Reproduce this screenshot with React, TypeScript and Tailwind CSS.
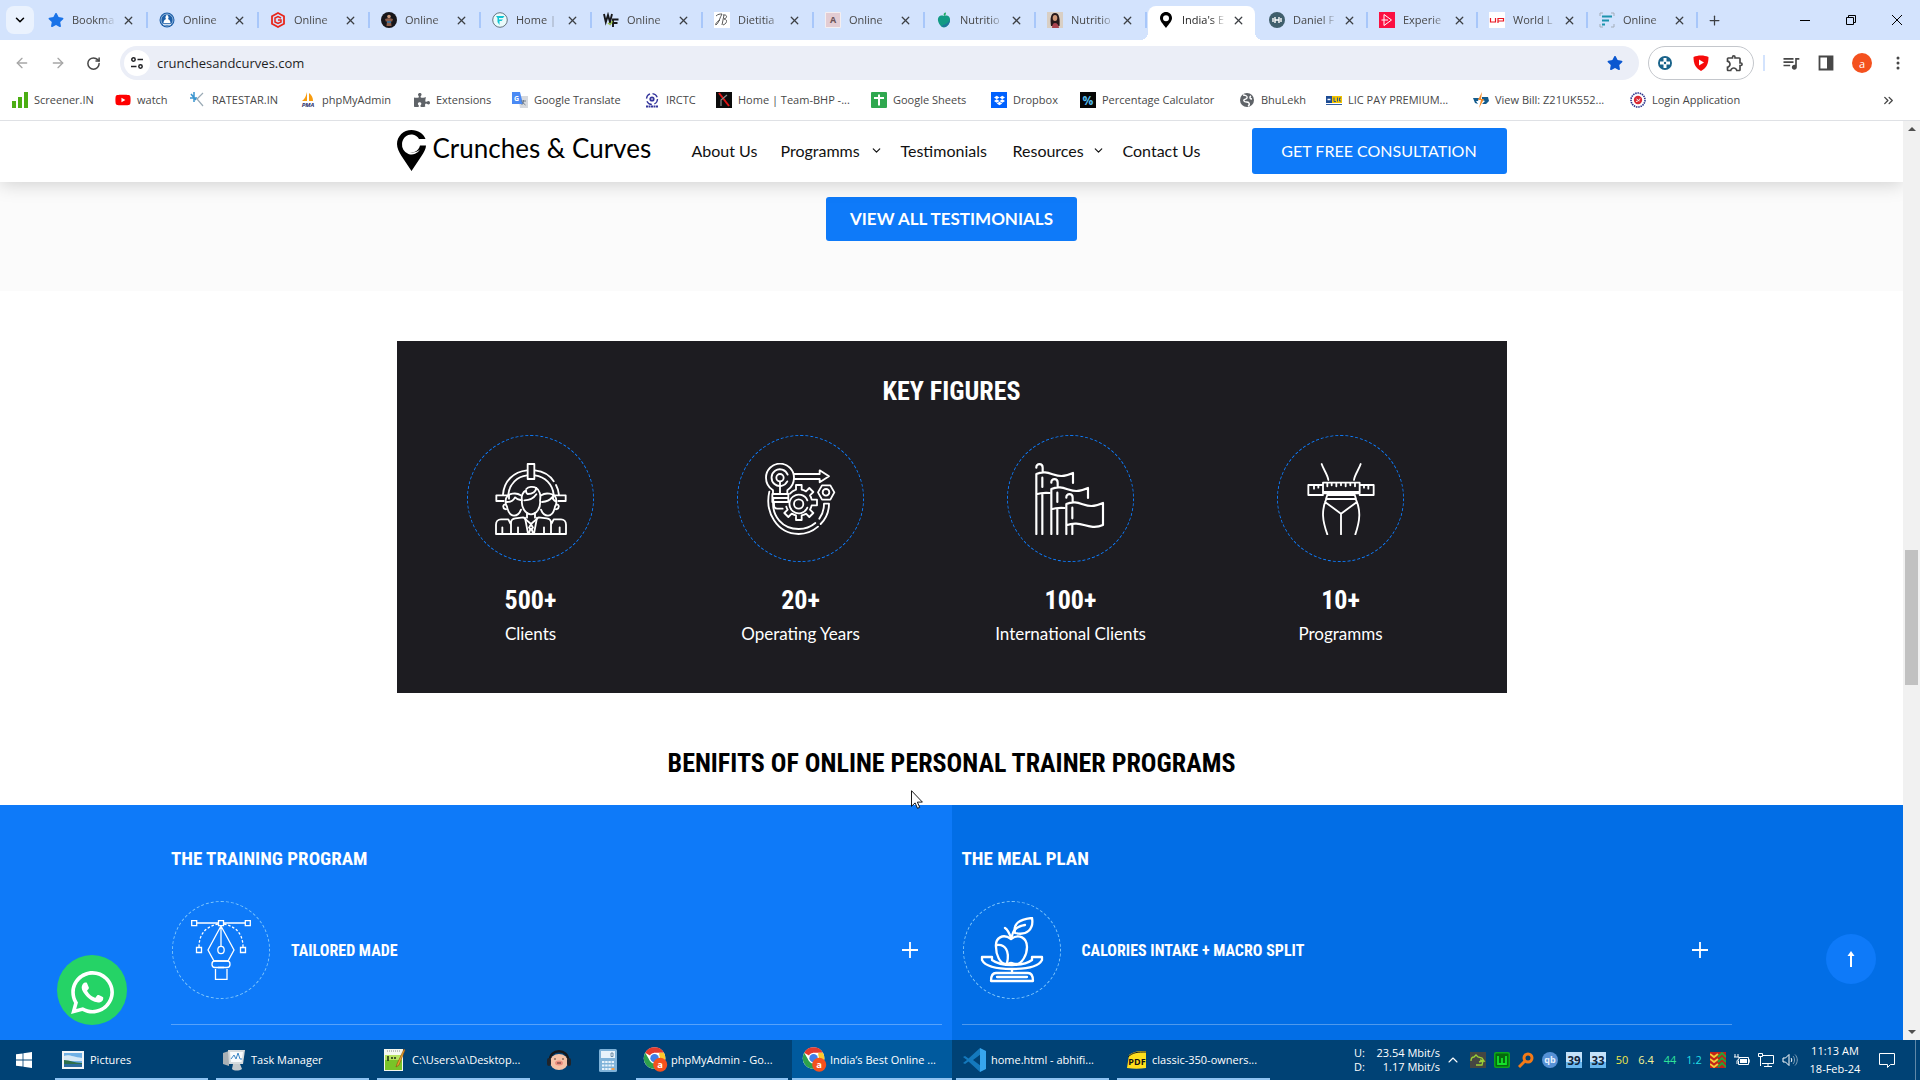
import type { ReactNode } from "react";
import { FaWhatsapp, FaYoutube, FaDropbox, FaStar, FaPuzzlePiece } from "react-icons/fa";
import { MdQueueMusic, MdOutlineExtension } from "react-icons/md";
import { ArrowLeft, ArrowRight, ChevronDown, ChevronUp, ChevronsRight, Plus, RotateCw, X } from "lucide-react";

const UI = "font-['Open_Sans','Noto_Sans',sans-serif]";
const BODY = "font-['Lato','Open_Sans',sans-serif]";
const DISPLAY = "font-['Roboto_Condensed','Roboto',sans-serif] font-bold";

function Svg({ box = "0 0 16 16", className = "size-4", children }: { box?: string; className?: string; children: ReactNode }) {
  return (
    <svg viewBox={box} className={`shrink-0 ${className}`} fill="none" aria-hidden="true">
      {children}
    </svg>
  );
}

function Letter({ children, fill, size = 9, x = 8, y = 11 }: { children: string; fill: string; size?: number; x?: number; y?: number }) {
  return (
    <text x={x} y={y} textAnchor="middle" fontSize={size} fontWeight="700" fill={fill} fontFamily="Open Sans, sans-serif">
      {children}
    </text>
  );
}

/* ---------- Tab icons ---------- */

const PIN = "M8 0C4.700 0 2 2.600 2 6c0 3 3 6 6 10 3-4 6-7 6-10 0-3.400-2.700-6-6-6Zm0 3.200a3 3 0 1 1 0 6 3 3 0 0 1 0-6Z";

type TabInfo = { title: string; icon: ReactNode; active?: boolean; late?: boolean };

const TABS: TabInfo[] = [
  { title: "Bookma", icon: <FaStar className="size-4 shrink-0 text-[#1a73e8]" /> },
  {
    title: "Online",
    icon: (
      <Svg>
        <circle cx="8" cy="8" r="7.500" fill="#1d5fa8" />
        <circle cx="8" cy="8" r="6" stroke="#dbe9f7" strokeWidth=".6" />
        <path d="M8 2.500c2 2.500 2 3.500.8 4.500C11 8 11.500 9.500 11.500 11h-7C4.500 9.500 5 8 7.200 7 6 6 6 5 8 2.500Z" fill="#fff" />
        <path d="M4 12.300h8" stroke="#fff" />
      </Svg>
    ),
  },
  {
    title: "Online",
    icon: (
      <Svg>
        <path d="m8 1 6 3.200v7.600L8 15l-6-3.200V4.200L8 1Z" stroke="#e8261c" strokeWidth="1.800" />
        <path d="M11 6 8 4.500 5 6v4l3 1.500 3-1.500V8H8" stroke="#e8261c" strokeWidth="1.500" />
      </Svg>
    ),
  },
  {
    title: "Online",
    icon: (
      <Svg>
        <circle cx="8" cy="8" r="8" fill="#17161a" />
        <circle cx="8" cy="4.500" r="1.800" fill="#c99a7c" />
        <path d="M4 7c2-1 6-1 8 0l-1 3-1-1 .5 5h-5l.5-5-1 1-1-3Z" fill="#8e5f4b" />
        <path d="M6 9h4v2H6z" fill="#3f6f93" />
      </Svg>
    ),
  },
  {
    title: "Home |",
    icon: (
      <Svg>
        <circle cx="8" cy="8" r="7.300" fill="#e9fbfb" stroke="#66757f" />
        <path d="M4 4h8.500l-1.500 2H7v1.500h4L9.500 9H7.500v4L5.500 10V6L4 4Z" fill="#12c4d3" />
      </Svg>
    ),
  },
  {
    title: "Online",
    icon: (
      <Svg>
        <path d="m1 2 1.800 8L5 3l2 7 2-8M10 15V7.500h5.500M10 11h4.500" stroke="#17181a" strokeWidth="1.900" />
        <path d="M5 11c2 2 4 1 4-2" stroke="#9cc93a" strokeWidth="1.200" />
      </Svg>
    ),
  },
  {
    title: "Dietitia",
    icon: (
      <Svg>
        <path fill="#fff" d="M0 0h16v16H0z" />
        <path d="M2 4c2-2 4-2 6-2-2 3-3 9-6 11-1 0 0-3 4-5M10 3 8 13M9 3c4-1 5 3 1 4 4 0 3 5-1 6" stroke="#4a4a4a" strokeWidth=".9" />
      </Svg>
    ),
  },
  {
    title: "Online",
    icon: (
      <Svg>
        <path fill="#e3ccd3" stroke="#f4eef0" d="M.5.5h15v15H.5z" />
        <Letter fill="#6a5358">A</Letter>
      </Svg>
    ),
  },
  {
    title: "Nutritio",
    icon: (
      <Svg>
        <path d="M8 4c4-1.500 6.500 1 6 4.500S10.500 15.500 8 15.500 2.500 12 2 8.500 4 2.500 8 4Z" fill="#129b84" />
        <path d="M8 15c4 0 6-4 6-7-2 3-5 5-9 6l3 1Z" fill="#20749c" />
        <path d="M8 4C7 2 8 .500 10 .500 10 2 9.500 3.500 8 4Z" fill="#1eab62" />
      </Svg>
    ),
  },
  {
    title: "Nutritio",
    icon: (
      <Svg>
        <path fill="#d9cfc4" d="M0 0h16v16H0z" />
        <path fill="#26181a" d="M4 14C3 7 3.500 1 8 1s5 6 4.500 13H4Z" />
        <ellipse cx="8" cy="6" rx="2.300" ry="3" fill="#cf9777" />
        <path fill="#a8434f" d="M5 16c0-3 1-5 3-5s4 2 4 5H5Z" />
      </Svg>
    ),
  },
  { title: "India's E", active: true, icon: <Svg><path d={PIN} fill="#000" fillRule="evenodd" /></Svg> },
  {
    title: "Daniel F",
    late: true,
    icon: (
      <Svg>
        <circle cx="8" cy="8" r="8" fill="#405f6c" />
        <path d="M4 6v4M6 5v6M10 5v6M12 6v4M6 8h4" stroke="#fff" strokeWidth="1.400" />
      </Svg>
    ),
  },
  {
    title: "Experie",
    late: true,
    icon: (
      <Svg>
        <path fill="#fb1142" d="M0 0h16v16H0z" />
        <path d="M5 2.500v11L12.500 8 5 2.500ZM2.500 8H9" stroke="#fff" strokeWidth="1" />
      </Svg>
    ),
  },
  {
    title: "World L",
    late: true,
    icon: (
      <Svg>
        <path fill="#fff" d="M0 0h16v16H0z" />
        <path d="M1.500 6v4h5V6M9 11V6.500h5.500V9H9" stroke="#ea1722" strokeWidth="1.200" />
      </Svg>
    ),
  },
  {
    title: "Online",
    late: true,
    icon: (
      <Svg>
        <path d="M1 4V1h3M12 1h3v3M15 12v3h-3M4 15H1v-3" stroke="#a3adb8" />
        <path d="M3 4.500h10M3 8.500h7M3 12.500h3" stroke="#1c93ad" strokeWidth="2.200" />
      </Svg>
    ),
  },
];

function Tab({ title, icon, active, late }: TabInfo) {
  return (
    <div className={`flex h-[34px] shrink-0 items-center ${late ? "w-[110px]" : "w-[111px]"}`}>
      <div className={`relative flex h-full min-w-0 flex-1 items-center pb-1.5 ${active ? "mx-px rounded-t-lg bg-white pl-2.5" : "pl-[11px]"}`}>
        {active && (
          <>
            <span className="absolute bottom-0 -left-2 size-2 bg-[radial-gradient(circle_at_0_0,#d3e3fd_8px,#fff_8px)]" />
            <span className="absolute bottom-0 -right-2 size-2 bg-[radial-gradient(circle_at_100%_0,#d3e3fd_8px,#fff_8px)]" />
          </>
        )}
        {icon}
        <span
          className={`ml-2 w-[44px] shrink-0 whitespace-nowrap text-[11px] [mask-image:linear-gradient(to_right,#000_65%,transparent)] ${active ? "text-[#1f1f1f]" : "text-[#474747]"}`}
        >
          {title}
        </span>
        <button type="button" aria-label={`Close ${title}`} className="ml-1.5 shrink-0 text-[#3c3f43]">
          <X size={13} strokeWidth={2.4} />
        </button>
      </div>
      <span className={`mb-1.5 h-4 w-0.5 ${active ? "bg-transparent" : "bg-[#a8c7fa]"}`} />
    </div>
  );
}

function TabStrip() {
  return (
    <div className="flex h-10 shrink-0 items-end bg-[#d3e3fd]">
      <button type="button" aria-label="Search tabs" className="mb-1.5 ml-1.5 mr-[3px] grid size-7 shrink-0 place-items-center rounded-lg bg-[#eaf2fe]">
        <ChevronDown size={14} strokeWidth={2.6} />
      </button>
      {TABS.map((t, i) => (
        <Tab key={i} {...t} />
      ))}
      <button type="button" aria-label="New tab" className="mb-2.5 ml-1.5 grid size-5 place-items-center text-[#3c3f43]">
        <Plus size={15} strokeWidth={2} />
      </button>
      <div className="ml-auto flex h-10 items-center">
        <button type="button" aria-label="Minimize" className="grid h-full w-[46px] place-items-center">
          <span className="h-px w-2.5 bg-black" />
        </button>
        <button type="button" aria-label="Restore" className="grid h-full w-[46px] place-items-center">
          <Svg box="0 0 10 10" className="size-2.5">
            <path d="M.5 2.500h7v7h-7zM2.500 2.500v-2h7v7h-2" stroke="#000" />
          </Svg>
        </button>
        <button type="button" aria-label="Close window" className="grid h-full w-[46px] place-items-center">
          <Svg box="0 0 10 10" className="size-2.5">
            <path d="m0 0 10 10M10 0 0 10" stroke="#000" />
          </Svg>
        </button>
      </div>
    </div>
  );
}

/* ---------- Address bar ---------- */

function Toolbar() {
  return (
    <div className="flex h-[46px] shrink-0 items-center bg-white text-[#474747]">
      <div className="flex w-[120px] shrink-0 items-center">
        <button type="button" aria-label="Back" className="ml-3.5 text-[#a6a6a6]"><ArrowLeft size={16} /></button>
        <button type="button" aria-label="Forward" className="ml-5 text-[#a6a6a6]"><ArrowRight size={16} /></button>
        <button type="button" aria-label="Reload" className="ml-5"><RotateCw size={15} strokeWidth={2.4} /></button>
      </div>
      <div className="flex h-[34px] min-w-0 flex-1 items-center rounded-full bg-[#ebeef7] pl-1 pr-4">
        <button type="button" aria-label="Site information" className="grid size-[26px] shrink-0 place-items-center rounded-full bg-white">
          <Svg box="0 0 14 14" className="size-3.5">
            <path d="M7.500 3.500H13M1 10.500h5.500" stroke="#202124" strokeWidth="1.700" />
            <circle cx="3.500" cy="3.500" r="1.700" stroke="#202124" strokeWidth="1.500" />
            <circle cx="10.500" cy="10.500" r="1.700" stroke="#202124" strokeWidth="1.500" />
          </Svg>
        </button>
        <input aria-label="Address" defaultValue="crunchesandcurves.com" className="ml-[7px] min-w-0 flex-1 bg-transparent pt-px text-[13px] text-[#1f1f1f] outline-none" />
        <button type="button" aria-label="Edit bookmark" className="text-[#0b57d0]"><FaStar size={16} /></button>
      </div>
      <div className="ml-[9px] flex h-[34px] w-[106px] shrink-0 items-center justify-between rounded-full border border-[#c4c7cc] px-2">
        <button type="button" aria-label="Extension">
          <Svg>
            <circle cx="8" cy="8" r="7" fill="#19638a" />
            <path d="M6.500 3h3v3.500H13v3H9.500V13h-3V9.500H3v-3h3.500V3Z" fill="#fff" />
            <circle cx="8" cy="8" r="1.200" fill="#19638a" />
          </Svg>
        </button>
        <button type="button" aria-label="Ad blocker" className="pl-1">
          <Svg>
            <path d="M8 .500c3 0 5 .5 7.500 1.500 0 7-2 11-7.500 14C2.500 13 .500 9 .500 2 3 1 5 .500 8 .500Z" fill="#f60b0b" />
            <path d="m6 4.500 5 3-5 3v-6Z" fill="#fff" />
          </Svg>
        </button>
        <button type="button" aria-label="Extensions"><MdOutlineExtension size={20} /></button>
      </div>
      <span className="ml-[9px] h-4 w-0.5 bg-[#d3e3fd]" />
      <div className="flex w-[155px] shrink-0 items-center">
        <button type="button" aria-label="Media controls" className="ml-4"><MdQueueMusic size={20} /></button>
        <button type="button" aria-label="Side panel" className="ml-[17px]">
          <Svg>
            <path d="M1.500 1.500h13v13h-13z" stroke="#474747" strokeWidth="1.800" />
            <path d="M9 1h6v14H9z" fill="#474747" />
          </Svg>
        </button>
        <button type="button" aria-label="Profile" className="ml-[18px] grid size-5 place-items-center rounded-full bg-[#f4511e] text-[11px] leading-none text-white">a</button>
        <button type="button" aria-label="Menu" className="ml-[18px]">
          <Svg>
            <path d="M8 3h.01M8 8h.01M8 13h.01" stroke="#474747" strokeWidth="3" strokeLinecap="round" />
          </Svg>
        </button>
      </div>
    </div>
  );
}

const BOOKMARKS: { label: string; width: string; icon: ReactNode }[] = [
  { label: "Screener.IN", width: "w-[103px]", icon: <Svg><path d="M0 9h4v7H0zM6 5h4v11H6zM12 0h4v16h-4z" fill="#4cae13" /></Svg> },
  { label: "watch", width: "w-[75px]", icon: <FaYoutube className="size-4 shrink-0 text-[#f00]" /> },
  {
    label: "RATESTAR.IN",
    width: "w-[110px]",
    icon: (
      <Svg>
        <path d="M4 0v10M0 6h7M1 2l5 6" stroke="#3a95cf" strokeWidth="1.500" />
        <path d="m13 1-6 6 6 7" stroke="#9aaab5" strokeWidth="1.200" />
      </Svg>
    ),
  },
  {
    label: "phpMyAdmin",
    width: "w-[114px]",
    icon: (
      <Svg>
        <path d="M7 0v9H2c3-2 4-5 5-9Zm2 1c3 2 4 5 4 8H9V1Z" fill="#f89c0e" />
        <text x="8" y="15" textAnchor="middle" fontSize="6" fontWeight="700" fontStyle="italic" fill="#2b2f6b" fontFamily="Open Sans">PMA</text>
      </Svg>
    ),
  },
  { label: "Extensions", width: "w-[98px]", icon: <FaPuzzlePiece className="size-4 shrink-0 text-[#5f6368]" /> },
  {
    label: "Google Translate",
    width: "w-[132px]",
    icon: (
      <Svg>
        <path d="M6 4h10v12H8z" fill="#d6d9de" />
        <path d="M0 0h8l3 12H0z" fill="#4a8af4" />
        <path d="M9 9h5M11.500 8v1c0 2-1 3-2 4M10 10l3.500 3" stroke="#6a7684" strokeWidth=".9" />
        <Letter x={4.500} y={9} size={7} fill="#fff">G</Letter>
      </Svg>
    ),
  },
  {
    label: "IRCTC",
    width: "w-[72px]",
    icon: (
      <Svg>
        <circle cx="8" cy="7" r="5.500" stroke="#35369c" strokeWidth="1.300" strokeDasharray="6 2.600" />
        <circle cx="8" cy="7" r="2.600" fill="#35369c" />
        <path d="M2 14.500h12" stroke="#35369c" strokeWidth="1.800" strokeDasharray="2 .5" />
        <path d="M7 7h2" stroke="#fff" />
      </Svg>
    ),
  },
  {
    label: "Home | Team-BHP -...",
    width: "w-[155px]",
    icon: (
      <Svg>
        <path fill="#0b0b0b" d="M0 0h16v16H0z" />
        <path d="m3 1 10 13" stroke="#e01414" strokeWidth="2" />
        <path d="M11 3 5 8v6" stroke="#8c8c8c" strokeWidth="1.200" />
      </Svg>
    ),
  },
  {
    label: "Google Sheets",
    width: "w-[120px]",
    icon: (
      <Svg>
        <rect width="16" height="16" rx="1" fill="#2fa84f" />
        <path d="M3 6h10M8 2.500v11" stroke="#fff" strokeWidth="2" />
      </Svg>
    ),
  },
  { label: "Dropbox", width: "w-[89px]", icon: <span className="grid size-4 shrink-0 place-items-center bg-[#0061fe] text-white"><FaDropbox size={11} /></span> },
  { label: "Percentage Calculator", width: "w-[159px]", icon: <Svg><path fill="#060606" d="M0 0h16v16H0z" /><Letter size={12} y={12.500} fill="#56bff0">%</Letter></Svg> },
  {
    label: "BhuLekh",
    width: "w-[87px]",
    icon: (
      <Svg>
        <circle cx="8" cy="8" r="7" fill="#5f6368" />
        <path d="M4 3c2 0 5 1 4 3S4 7 5 9s4 0 5 2-1 3-1 3M12 4c-2 1-1 3 1 3" stroke="#fff" strokeWidth="1.400" />
      </Svg>
    ),
  },
  {
    label: "LIC PAY PREMIUM...",
    width: "w-[147px]",
    icon: (
      <Svg>
        <path fill="#1c4b94" d="M0 4h6v7H0z" />
        <path fill="#f3c400" d="M6 4h10v7H6z" />
        <path d="M8 5.500v4h2M11.500 5.500v4M15 6h-1.500v3H15M0 12.500h16" stroke="#1c4b94" strokeWidth=".9" />
        <path d="M1.500 7.500h3" stroke="#fff" strokeWidth="1.500" />
      </Svg>
    ),
  },
  {
    label: "View Bill: Z21UK552...",
    width: "w-[157px]",
    icon: (
      <Svg>
        <path d="M0 6h6l-1 3H3l2 3-3-1L0 6Z" fill="#145c8d" />
        <path d="M9 5h6l1 4-3 3H9l3-3-3-1V5Z" fill="#145c8d" />
        <path d="m9 0-4 8h3l-2 8 5-9H8l1-7Z" fill="#f58b28" />
      </Svg>
    ),
  },
  {
    label: "Login Application",
    width: "w-[130px]",
    icon: (
      <Svg>
        <circle cx="8" cy="8" r="7" stroke="#28328b" strokeWidth="1.600" strokeDasharray="1.500 .8" />
        <circle cx="8" cy="8" r="4.200" fill="#d92a34" />
        <path d="M6 9.500c1 0 4-1 4-3M6.500 7l3 2" stroke="#fff" strokeWidth=".9" />
      </Svg>
    ),
  },
];

function BookmarksBar() {
  return (
    <nav aria-label="Bookmarks" className="flex h-[34px] shrink-0 items-center bg-white pb-1.5 pl-3 text-[11px] text-[#474747]">
      {BOOKMARKS.map((b) => (
        <a key={b.label} href="#" className={`flex shrink-0 items-center gap-1.5 whitespace-nowrap ${b.width}`}>
          {b.icon}
          {b.label}
        </a>
      ))}
      <button type="button" aria-label="More bookmarks" className="ml-auto mr-6"><ChevronsRight size={15} strokeWidth={2.2} /></button>
    </nav>
  );
}

/* ---------- Site ---------- */

function SiteHeader() {
  return (
    <header className="relative z-10 h-[61px] shrink-0 bg-white pb-0.5 shadow-[0_2px_18px_rgba(0,0,0,0.18)]">
      <div className="mx-auto flex h-full max-w-[1110px] items-center text-[16px] text-[#111]">
        <a href="#" className="flex w-[295px] shrink-0 items-center gap-[7px] text-[26px] leading-none text-black">
          <Svg box="0 0 29 41" className="h-[41px] w-[29px]">
            <path d="M14.500 0C6.500 0 0 6.200 0 14c0 4 2 8 4.500 12l10 15 10-15C27 22 29 19 29 15.500h-6a9 9 0 1 1-1-6.500h6.500C26.500 3.500 21 0 14.500 0Z" fill="#000" />
            <path d="M15 5.500a9.500 9.500 0 1 0 8 14c-2 2-5 3-8 3a8.500 8.500 0 0 1 0-17Z" fill="#fff" />
          </Svg>
          <span className="whitespace-nowrap pb-1.5">Crunches &amp; Curves</span>
        </a>
        <nav className="flex flex-1 items-center whitespace-nowrap">
          <a href="#" className="w-[89px]">About Us</a>
          <a href="#" className="flex w-[120px] items-center justify-between pr-[18px]">Programms <ChevronDown size={13} strokeWidth={2.2} /></a>
          <a href="#" className="w-[112px]">Testimonials</a>
          <a href="#" className="flex w-[110px] items-center justify-between pr-[18px]">Resources <ChevronDown size={13} strokeWidth={2.2} /></a>
          <a href="#">Contact Us</a>
        </nav>
        <a href="#" className="grid h-[46px] w-[255px] shrink-0 place-items-center rounded-[3px] bg-[#0e7af9] text-white">GET FREE CONSULTATION</a>
      </div>
    </header>
  );
}

function ClientsIcon() {
  return (
    <Svg box="0 0 216 216" className="size-[72px]">
      <g stroke="#fff" strokeWidth="5.500" strokeLinecap="round" strokeLinejoin="round">
        <path d="M98 3h20v45H98zM26 114H4V97h38v10M190 114h22V97h-38v10" />
        <path d="M24 95C27 55 55 26 96 22M120 22c25 3 45 15 56 33M183 66c5 9 8 20 9 30M40 95c3-32 27-55 56-58M120 37c30 4 53 27 56 58" />
        <path d="M81 112c-3 20 10 42 27 42s30-20 27-42M81 112c-3-12 2-25 12-30 0 6 1 10 5 11 14 0 24-6 26-18 10 6 14 22 11 37M88 112c12 0 28-6 36-18M94 78c6-7 20-9 30-3" />
        <path d="M33 106c6-16 32-18 44-9M33 106c-2 10-1 20 3 25 3 15 11 27 21 27 9 0 17-7 21-18M32 124c-9-1-11 13 1 15M36 117c10 0 20-6 24-14 5 5 10 7 17 8" />
        <path d="M183 106c-6-16-32-18-44-9M183 106c2 10 1 20-3 25-3 15-11 27-21 27-9 0-17-7-21-18M184 124c9-1 11 13-1 15M141 117c14-1 24-6 30-14 3 5 5 9 10 12" />
        <path d="M3 213v-28c0-9 6-16 15-16h22l6 12M48 213v-34c0-8 6-12 13-13l24-3 23 20 23-20 24 3c7 1 13 5 13 13v34M213 213v-28c0-9-6-16-15-16h-22l-6 12M3 213h210" />
        <path d="M22 193v18M194 193v18M69 193v18M147 193v18M90 164l9 48M126 164l-9 48M108 184l-6 10 6 6 6-6-6-10ZM105 200l-3 12M111 200l3 12M96 150v14M120 150v14" />
      </g>
    </Svg>
  );
}

function YearsIcon() {
  return (
    <Svg box="0 0 216 216" className="size-[72px]">
      <g stroke="#fff" strokeWidth="5.500" strokeLinecap="round" strokeLinejoin="round">
        <path d="M24 92V82C9 72 3 58 3 44a42 42 0 0 1 84 0c0 14-6 28-20 38v10" />
        <path d="M67 55a25 25 0 1 1 1-20" />
        <circle cx="45" cy="44" r="11" />
        <path d="M45 56v35M22 93h48v12H22zM22 105h48v12H22zM27 118v8c0 6 4 11 10 11h16" />
        <path d="M88 33h76V22l28 18-28 18V48H88" />
        <path d="m171 67 25 0 12 21-12 22h-25l-12-22 12-21Z" />
        <circle cx="183" cy="88" r="10" />
        <path d="M93 80V66h17v14c5 1 9 3 13 5l10-10 12 12-10 10c3 4 4 8 5 13h16v17h-16c-1 5-3 9-5 13l10 10-12 12-10-10c-4 3-8 4-13 5v14H93v-14c-5-1-9-3-13-5l-10 10-12-12 10-10c-2-3-3-6-4-9M75 92c4-5 11-10 18-12" />
        <path d="M127 134a28 28 0 1 1 0-22" />
        <circle cx="101" cy="123" r="14" />
        <path d="M13 86c-14 60 22 127 88 127 22 0 42-8 58-22M25 110c-6 50 28 88 76 88 20 0 36-6 50-18M167 183c16-16 25-36 25-61h-15c0 18-5 33-14 45" />
      </g>
    </Svg>
  );
}

function FlagsIcon() {
  return (
    <Svg box="0 0 216 216" className="size-[72px]">
      <g stroke="#fff" strokeWidth="6.500" strokeLinecap="round" strokeLinejoin="round">
        <path d="M4 213V33c30-14 50 6 75 6 14 0 24-4 35-9v30M4 14c-1-14 19-14 19 0v14M22 44v28M22 92v121M4 94c14-5 26-5 40-4" />
        <path d="M49 213V78c30-14 50 6 75 6 14 0 24-4 35-9v30M49 59c-1-14 19-14 19 0v14M67 89v28M67 137v76M49 139c14-5 26-5 40-4" />
        <path d="M94 213v-90c30-14 50 6 75 6 14 0 24-4 35-9v66c-11 5-21 7-35 5-25-4-45-16-75-4M94 104c-1-14 19-14 19 0v14M112 134v32M112 186v27" />
      </g>
    </Svg>
  );
}

function WaistIcon() {
  return (
    <Svg box="0 0 202 216" className="h-[72px] w-[68px]">
      <g stroke="#fff" strokeWidth="5.500" strokeLinecap="round" strokeLinejoin="round">
        <path d="M43 3c5 16 18 32 20 48M160 3c-5 16-18 32-20 48" />
        <path d="M47 59h110v32H47zM47 66H3v30h44M157 66h42v30h-42M20 67v10M33 67v7M170 67v7M183 67v10M47 87h110" />
        <path d="M60 61v9M73 61v6M87 61v9M101 61v6M115 61v9M129 61v6M143 61v9" />
        <path d="M60 95l-4 13h90l-4-13M62 96h78M56 110c-13 32-12 60 4 104M146 110c14 32 13 60-2 104M53 117l48 35 48-35M101 152v62" />
      </g>
    </Svg>
  );
}

function PenIcon() {
  return (
    <Svg box="0 0 60 60" className="size-[60px]">
      <g stroke="#fff" strokeWidth="1.300">
        <path d="M.700.700h5v5h-5zM27.500.700h5v5h-5zM54.300.700h5v5h-5zM5.600 3h22M32.500 3h22M5.500 27.500h5v5h-5zM49.500 27.500h5v5h-5z" />
        <path d="M27 4C13 7 8 16 8 27M33 4c14 3 19 12 19 23" strokeDasharray="2.500 1.800" />
        <path d="M30 6 17 30l6 11h14l6-11L30 6ZM30 6v20" />
        <ellipse cx="30" cy="30" rx="3.200" ry="3.600" />
        <rect x="21" y="41" width="18" height="6.500" rx="3" />
        <path d="M24.500 49v10.300h11.500V49M27 47.500h6" />
      </g>
    </Svg>
  );
}

function AppleIcon() {
  return (
    <Svg box="0 0 64 66" className="h-[66px] w-[64px]">
      <g stroke="#fff" strokeWidth="2.300" strokeLinecap="round" strokeLinejoin="round">
        <path d="M31 21c-2-6-3-8-6-10M32 19c1-5 5-10 13-11" />
        <path d="M35 16c-2-9 4-14 17-15 2 11-5 18-17 15Z" />
        <path d="M31 22c-8-6-16-1-15 8 0 8 4 17 10 17 2 0 3-1 5-1s3 1 5 1c6 0 11-9 11-17 0-9-8-14-16-8Z" />
        <path d="M17 28c8-1 13 6 10 18" />
        <path d="M12 40H2v3c3 6 15 9 30 9s27-3 30-9v-3H52v3M12 40v3c4 3 10 5 20 5s16-2 20-5M32 52v4" />
        <path d="M16 56h32c3 0 5 3 5 8H11c0-5 2-8 5-8ZM17 60h30" />
      </g>
    </Svg>
  );
}

const FIGURES = [
  { value: "500+", label: "Clients", icon: <ClientsIcon /> },
  { value: "20+", label: "Operating Years", icon: <YearsIcon /> },
  { value: "100+", label: "International Clients", icon: <FlagsIcon /> },
  { value: "10+", label: "Programms", icon: <WaistIcon /> },
];

function KeyFigures() {
  return (
    <section className="mx-auto mt-[50px] h-[352px] w-full max-w-[1110px] shrink-0 bg-[#1d1c21] text-white">
      <h2 className={`pt-[30px] text-center text-[26px] leading-10 ${DISPLAY}`}>KEY FIGURES</h2>
      <div className="-ml-px mt-6 grid grid-cols-4 pr-[31px]">
        {FIGURES.map((f) => (
          <div key={f.label} className="flex flex-col items-center">
            <div className="grid size-[127px] place-items-center rounded-full border border-dashed border-[#0e7af9]">{f.icon}</div>
            <div className={`mt-5 text-[26px] leading-9 ${DISPLAY}`}>{f.value}</div>
            <div className="mt-1 text-[17px] leading-6">{f.label}</div>
          </div>
        ))}
      </div>
    </section>
  );
}

function Benefit({ heading, item, icon, align }: { heading: string; item: string; icon: ReactNode; align: "left" | "right" }) {
  return (
    <section className={`min-w-0 flex-1 pt-9 text-white ${align === "left" ? "bg-[#0e7af9] pl-[171px] pr-2.5" : "bg-[#026ee6] pl-2.5 pr-[171px]"}`}>
      <h3 className={`h-9 text-[19px] leading-9 ${DISPLAY}`}>{heading}</h3>
      <button type="button" className="mt-6 flex w-full items-center border-b border-white/30 pb-[25px] pl-px pr-6 text-left">
        <span className="grid size-[98px] shrink-0 place-items-center rounded-full border border-dashed border-[#7cc4fb]">{icon}</span>
        <span className={`ml-[21px] flex-1 pt-0.5 text-[16px] leading-6 ${DISPLAY}`}>{item}</span>
        <Svg className="size-4"><path d="M8 0v16M0 8h16" stroke="#fff" strokeWidth="1.800" /></Svg>
      </button>
    </section>
  );
}

function Site() {
  return (
    <div className="relative flex min-h-0 flex-1 border-t border-[#dfe1e5]">
      <div className={`flex min-w-0 flex-1 flex-col overflow-hidden bg-white ${BODY}`}>
        <SiteHeader />
        <div className="flex h-[109px] shrink-0 items-start justify-center bg-[#fbfbfb] pt-[15px]">
          <a href="#" className="grid h-11 w-[251px] place-items-center rounded-[3px] bg-[#0e7af9] text-[17px] font-bold text-white">VIEW ALL TESTIMONIALS</a>
        </div>
        <KeyFigures />
        <h2 className={`mt-[50px] shrink-0 pb-[22px] text-center text-[26px] leading-10 text-black ${DISPLAY}`}>BENIFITS OF ONLINE PERSONAL TRAINER PROGRAMS</h2>
        <div className="flex flex-1">
          <Benefit heading="THE TRAINING PROGRAM" item="TAILORED MADE" icon={<PenIcon />} align="left" />
          <Benefit heading="THE MEAL PLAN" item="CALORIES INTAKE + MACRO SPLIT" icon={<AppleIcon />} align="right" />
        </div>
      </div>
      <div className="flex w-[17px] shrink-0 flex-col items-center bg-[#f1f1f1]">
        <Svg className="mt-1 h-2 w-2"><path d="M0 12 8 4l8 8H0Z" fill="#505050" /></Svg>
        <div className="mt-[417px] h-[135px] w-[13px] bg-[#c1c1c1]" />
        <Svg className="mb-1 mt-auto h-2 w-2"><path d="m0 4 8 8 8-8H0Z" fill="#505050" /></Svg>
      </div>
      <a href="#" aria-label="Chat on WhatsApp" className="absolute bottom-[15px] left-[57px] grid size-[70px] place-items-center rounded-full bg-[#25d366] pt-1 text-white"><FaWhatsapp size={49} /></a>
      <a href="#" aria-label="Back to top" className="absolute bottom-14 right-11 grid size-[50px] place-items-center rounded-full bg-[#0e7af9]">
        <Svg box="0 0 8 16" className="h-4 w-2"><path d="M4 16V3" stroke="#fff" strokeWidth="2" /><path d="M4 0 .500 5h7L4 0Z" fill="#fff" /></Svg>
      </a>
      <Svg box="0 0 12 19" className="absolute left-[911px] top-[669px] h-[19px] w-3">
        <path d="M.5.7v15.600l3.600-3.400 2.400 5.400 2.200-1-2.300-5.200h5L.500.700Z" fill="#fff" stroke="#000" strokeWidth=".9" />
      </Svg>
    </div>
  );
}

/* ---------- Taskbar ---------- */

function ChromeIcon() {
  return (
    <Svg box="0 0 26 32" className="h-[30px] w-[25px]">
      <circle cx="12" cy="14" r="11.500" fill="#fff" />
      <path d="M12 14 2 8.300A11.500 11.500 0 0 1 22 8.300H12v5.700Z" fill="#e33b2e" />
      <path d="M2 8.300A11.500 11.500 0 0 0 12 25.500l5-8.700-10 0L2 8.300Z" fill="#2da04c" />
      <path d="M22 8.300a11.500 11.500 0 0 1-10 17.200l5-8.700V8.300h5Z" fill="#fcc72b" />
      <circle cx="12" cy="14" r="5.700" fill="#fff" />
      <circle cx="12" cy="14" r="4.500" fill="#3f7ee8" />
      <circle cx="18" cy="21" r="7.500" fill="#f4511e" />
      <Letter x={18} y={24.500} size={10} fill="#fff">a</Letter>
    </Svg>
  );
}

const TASKS: { label?: string; name: string; icon: ReactNode; active?: boolean; width: string }[] = [
  {
    name: "Pictures", label: "Pictures", width: "w-[161px]",
    icon: (
      <Svg box="0 0 22 18" className="h-[18px] w-[22px]">
        <path fill="#f2f5f7" d="M0 0h22v18H0z" />
        <path fill="#6fb1e6" d="M2 2h18v14H2z" />
        <path fill="#d6e9f6" d="M2 5c5-2 9 1 18 2v3H2V5Z" />
        <path fill="#2e6f4c" d="M2 9c6 0 10 3 18 3v4H2V9Z" />
        <path fill="#2b6c9f" d="M2 13h18v3H2z" />
      </Svg>
    ),
  },
  {
    name: "Task Manager", label: "Task Manager", width: "w-[161px]",
    icon: (
      <Svg box="0 0 22 22" className="size-[22px]">
        <path fill="#a9b0b5" d="M0 4 6 2v15l-6-2V4Z" />
        <path fill="#d5dadd" d="M5 1h17l-2 14H6L5 1Z" />
        <path fill="#f8fbfd" d="M7 3h13l-1.500 10H8L7 3Z" />
        <path d="m8 10 3-4 2 4 2-6 2 6h2" stroke="#3d86c6" />
        <path fill="#c3c9cd" d="M10 15h7l2 5c-3 2-8 2-10 0l1-5Z" />
      </Svg>
    ),
  },
  {
    name: "Notepad++", label: "C:\\Users\\a\\Desktop...", width: "w-[161px]",
    icon: (
      <Svg box="0 0 22 24" className="h-6 w-[22px]">
        <path fill="#f5f8ef" d="M0 1h19v22H0z" />
        <path fill="#79c428" d="M1 9h17v13H1z" />
        <path fill="#b6e35f" d="M1 7h17v5H1z" />
        <path d="M3 3h14" stroke="#888" strokeDasharray="1 1" />
        <path d="M4 8v5M7 10h2M10 10h2" stroke="#1c2d12" strokeWidth="1.500" />
        <path d="m20 1-7 15-1 3 3-2 6-15-1-1Z" fill="#e9a22c" stroke="#8a4c11" strokeWidth=".6" />
      </Svg>
    ),
  },
  {
    name: "Voice chat", width: "w-[49px]",
    icon: (
      <Svg box="0 0 24 20" className="h-5 w-6">
        <path d="M3 11C2-2 22-2 21 11" stroke="#15171a" strokeWidth="2.500" />
        <ellipse cx="12" cy="12" rx="9" ry="8" fill="#f6c3a7" />
        <rect x="0" y="8" width="4" height="8" rx="2" fill="#20242a" />
        <rect x="20" y="8" width="4" height="8" rx="2" fill="#20242a" />
        <ellipse cx="12" cy="13" rx="4" ry="2.500" fill="#ec8f80" />
        <path d="M8 9h.01M16 9h.01M11 13h.01M13 13h.01" stroke="#33211f" strokeWidth="1.500" strokeLinecap="round" />
      </Svg>
    ),
  },
  {
    name: "Calculator", width: "w-[49px]",
    icon: (
      <Svg box="0 0 18 23" className="h-[23px] w-[18px]">
        <rect width="18" height="23" rx="1.500" fill="#7fb3d9" />
        <path fill="#e8f3fb" d="M2 2h14v7H2z" />
        <path d="M3 13h12M3 16.500h12M3 20h12" stroke="#e8f3fb" strokeWidth="2" strokeDasharray="2.400 .8" />
        <path d="M12.500 20h3" stroke="#f5a04c" strokeWidth="2" />
        <path d="M12 4h2v3.500h-2z" stroke="#507592" strokeWidth=".8" />
      </Svg>
    ),
  },
  { name: "phpMyAdmin", label: "phpMyAdmin - Go...", width: "w-[160px]", icon: <ChromeIcon /> },
  { name: "India’s Best Online", label: "India’s Best Online ...", width: "w-[160px]", active: true, icon: <ChromeIcon /> },
  {
    name: "Visual Studio Code", label: "home.html - abhifi...", width: "w-[161px]",
    icon: (
      <Svg box="0 0 24 24" className="size-6">
        <path d="M17 0 5.500 10.500 2 8 0 9l4 3-4 3 2 1 3.500-2.500L17 24l1-6-8-6 8-6-1-6Z" fill="#1479bd" />
        <path d="m17 0 6 3v18l-6 3V0Z" fill="#37a6ee" />
      </Svg>
    ),
  },
  {
    name: "PDF reader", label: "classic-350-owners...", width: "w-[161px]",
    icon: (
      <Svg box="0 0 21 18" className="ml-0.5 h-[18px] w-[21px]">
        <path d="M3 4C8 0 14 0 20 0v17c-6 1-13 1-19 0L3 4Z" fill="#ffdf1c" />
        <path d="M2 6c5-5 10-5 18-5" stroke="#1a1a1a" />
        <Letter x={11} y={13.500} size={9} fill="#111">PDF</Letter>
      </Svg>
    ),
  },
];

const TRAY: { name: string; icon: ReactNode }[] = [
  { name: "GPU tool", icon: <Svg><path fill="#454642" d="M0 0h16v16H0z" /><path d="M1 9c0-3 1-4 3-4l2-2 2 2 4 1 2 3-4-1M9 10l4-1-1 4H6" stroke="#9bd136" strokeWidth="1.300" /></Svg> },
  { name: "Web server", icon: <Svg><rect width="16" height="16" rx="2" fill="#0ca71a" /><rect x="1.500" y="1.500" width="13" height="13" rx="1" fill="#07690f" /><path d="M4 4v8h8V4M8 6v6" stroke="#15e22c" strokeWidth="1.800" /></Svg> },
  { name: "Search", icon: <Svg><circle cx="10" cy="6" r="4" stroke="#f47a17" strokeWidth="3" /><path d="m7 9-6 6" stroke="#f47a17" strokeWidth="3" /></Svg> },
  { name: "qBittorrent", icon: <Svg><circle cx="8" cy="8" r="8" fill="#5591d6" /><Letter y={11} size={9} fill="#e5f0fb">qb</Letter></Svg> },
  { name: "CPU temperature", icon: <Svg><path fill="#c4e2fa" d="M0 0h16v16H0z" /><path fill="#68b7ef" d="M0 10h16v6H0z" /><Letter y={12.500} size={11.500} fill="#10243a">39</Letter></Svg> },
  { name: "Disk temperature", icon: <Svg><path fill="#c4e2fa" d="M0 0h16v16H0z" /><path fill="#68b7ef" d="M0 10h16v6H0z" /><Letter y={12.500} size={11.500} fill="#10243a">33</Letter></Svg> },
  { name: "Load", icon: <span className="text-[#f0e84a]">50</span> },
  { name: "Memory", icon: <span className="text-[#f5f394]">6.4</span> },
  { name: "GPU", icon: <span className="text-[#2fe29a]">44</span> },
  { name: "Fan", icon: <span className="text-[#21dfe5]">1.2</span> },
  {
    name: "Power tool",
    icon: (
      <Svg>
        <path fill="#c22318" d="M0 0h16v16H0z" />
        <path d="m0 2 4 3 4-3M0 7l4 3 4-3M0 12l4 3 4-3" stroke="#f2cd39" strokeWidth="1.800" />
        <path d="m8 5 4-4 4 4M8 10l4-4 4 4M8 15l4-4 4 4" stroke="#22a53a" strokeWidth="1.800" />
      </Svg>
    ),
  },
  { name: "Battery", icon: <Svg><path d="M5 5.500h9.500v7H4.500v-4M14.500 8H16v2h-1.500M1 2v3M4 2v3M0 5h5v2L3 8.500V12" stroke="#fff" /><path fill="#fff" d="M6 7h7v4H6z" /></Svg> },
  { name: "Network", icon: <Svg><path d="M5 3.500h10.500v8H4M10 11.500V14M6 14.500h8M.500 1.500h4v3h-4zM2.500 5v9" stroke="#fff" /></Svg> },
  { name: "Volume", icon: <Svg><path d="M1 6h2.500L7 2.500v11L3.500 10H1V6ZM9 6c1 1 1 3 0 4" stroke="#fff" /><path d="M11 4c2 2 2 6 0 8M13 2.500c3 3 3 8 0 11" stroke="#7f9fb8" /></Svg> },
];

function Taskbar() {
  return (
    <footer className="flex h-10 shrink-0 items-stretch bg-[#004275] text-[11px] text-white">
      <button type="button" aria-label="Start" className="flex w-[51px] shrink-0 items-center pl-4">
        <Svg><path d="M0 2.300 6.600 1.400v6.100H0V2.300ZM7.400 1.300 16 0v7.500H7.400V1.300ZM0 8.400h6.600v6.200L0 13.700V8.400ZM7.400 8.400H16V16l-8.600-1.200V8.400Z" fill="#fff" /></Svg>
      </button>
      {TASKS.map((t) => (
        <button
          type="button"
          key={t.name}
          aria-label={t.name}
          className={`flex shrink-0 flex-col ${t.width} ${t.active ? "bg-[#005a9e]" : t.label ? "px-1" : ""}`}
        >
          <span className={`flex w-full flex-1 items-center whitespace-nowrap pt-0.5 ${!t.label ? "justify-center" : t.active ? "pl-2.5" : "pl-[7px]"}`}>
            <span className={t.label ? "flex w-7 shrink-0 items-center" : "flex"}>{t.icon}</span>
            {t.label}
          </span>
          <span className={`h-0.5 w-full ${t.label ? "bg-[#8ec3f2]" : ""}`} />
        </button>
      ))}
      <div className="ml-auto flex items-center">
        <div className="flex w-[86px] justify-between leading-[14px]">
          <span>U:<br />D:</span>
          <span className="text-right">23.54 Mbit/s<br />1.17 Mbit/s</span>
        </div>
        <button type="button" aria-label="Show hidden icons" className="grid w-[26px] place-items-center"><ChevronUp size={16} strokeWidth={1.6} /></button>
        {TRAY.map((t) => (
          <button key={t.name} type="button" aria-label={t.name} className="grid w-6 place-items-center">{t.icon}</button>
        ))}
        <div className="w-[66px] text-center leading-[18px]">11:13 AM<br />18-Feb-24</div>
        <button type="button" aria-label="Notifications" className="grid w-[38px] place-items-center">
          <Svg><path d="M.5 1.500h15v11h-4l-3 3v-3h-8v-11Z" stroke="#fff" /></Svg>
        </button>
        <span className="ml-[9px] mr-1 h-10 w-px bg-[#5f88a8]" />
      </div>
    </footer>
  );
}

export default function App() {
  return (
    <div className={`flex h-screen flex-col overflow-hidden ${UI}`}>
      <TabStrip />
      <Toolbar />
      <BookmarksBar />
      <Site />
      <Taskbar />
    </div>
  );
}
